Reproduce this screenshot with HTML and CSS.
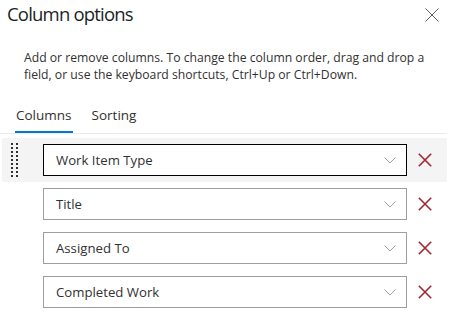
FILE: index.html
```html
<!DOCTYPE html>
<html lang="en">
<head>
<meta charset="utf-8">
<title>Column options</title>
<link rel="stylesheet" href="styles.css">
</head>
<body>
<div class="panel">
  <div class="header">
    <h1 class="title">Column options</h1>
    <button class="close" aria-label="Close">
      <svg width="14" height="14" viewBox="0 0 14 14"><path d="M0.5 0.5L13.5 13.5M13.5 0.5L0.5 13.5" stroke="#605e5c" stroke-width="1" fill="none"/></svg>
    </button>
  </div>
  <p class="desc">Add or remove columns. To change the column order, drag and drop a field, or use the keyboard shortcuts, Ctrl+Up or Ctrl+Down.</p>
  <div class="tabs">
    <div class="tab active">Columns</div>
    <div class="tab">Sorting</div>
  </div>
  <div class="rows">
    <div class="row hover">
      <div class="handle">
        <svg width="8" height="34" viewBox="0 0 8 34">
          <g fill="#323130">
            <rect x="0" y="0" width="2" height="2"/><rect x="5" y="0" width="2" height="2"/>
            <rect x="0" y="4" width="2" height="2"/><rect x="5" y="4" width="2" height="2"/>
            <rect x="0" y="8" width="2" height="2"/><rect x="5" y="8" width="2" height="2"/>
            <rect x="0" y="12" width="2" height="2"/><rect x="5" y="12" width="2" height="2"/>
            <rect x="0" y="16" width="2" height="2"/><rect x="5" y="16" width="2" height="2"/>
            <rect x="0" y="20" width="2" height="2"/><rect x="5" y="20" width="2" height="2"/>
            <rect x="0" y="24" width="2" height="2"/><rect x="5" y="24" width="2" height="2"/>
            <rect x="0" y="28" width="2" height="2"/><rect x="5" y="28" width="2" height="2"/>
            <rect x="0" y="32" width="2" height="2"/><rect x="5" y="32" width="2" height="2"/>
          </g>
        </svg>
      </div>
      <div class="dropdown focused"><span>Work Item Type</span><svg class="chev" width="12" height="7" viewBox="0 0 12 7"><path d="M0.5 0.5L6 6L11.5 0.5" stroke="#a19f9d" stroke-width="1" fill="none"/></svg></div>
      <button class="remove" aria-label="Remove"><svg width="14" height="14" viewBox="0 0 14 14"><path d="M0.8 0.8L13.2 13.2M13.2 0.8L0.8 13.2" stroke="#a4262c" stroke-width="1.6" fill="none"/></svg></button>
    </div>
    <div class="row">
      <div class="handle"></div>
      <div class="dropdown"><span>Title</span><svg class="chev" width="12" height="7" viewBox="0 0 12 7"><path d="M0.5 0.5L6 6L11.5 0.5" stroke="#a19f9d" stroke-width="1" fill="none"/></svg></div>
      <button class="remove" aria-label="Remove"><svg width="14" height="14" viewBox="0 0 14 14"><path d="M0.8 0.8L13.2 13.2M13.2 0.8L0.8 13.2" stroke="#a4262c" stroke-width="1.6" fill="none"/></svg></button>
    </div>
    <div class="row">
      <div class="handle"></div>
      <div class="dropdown"><span>Assigned To</span><svg class="chev" width="12" height="7" viewBox="0 0 12 7"><path d="M0.5 0.5L6 6L11.5 0.5" stroke="#a19f9d" stroke-width="1" fill="none"/></svg></div>
      <button class="remove" aria-label="Remove"><svg width="14" height="14" viewBox="0 0 14 14"><path d="M0.8 0.8L13.2 13.2M13.2 0.8L0.8 13.2" stroke="#a4262c" stroke-width="1.6" fill="none"/></svg></button>
    </div>
    <div class="row">
      <div class="handle"></div>
      <div class="dropdown"><span>Completed Work</span><svg class="chev" width="12" height="7" viewBox="0 0 12 7"><path d="M0.5 0.5L6 6L11.5 0.5" stroke="#a19f9d" stroke-width="1" fill="none"/></svg></div>
      <button class="remove" aria-label="Remove"><svg width="14" height="14" viewBox="0 0 14 14"><path d="M0.8 0.8L13.2 13.2M13.2 0.8L0.8 13.2" stroke="#a4262c" stroke-width="1.6" fill="none"/></svg></button>
    </div>
  </div>
</div>
</body>
</html>
```

FILE: styles.css
```css
* { box-sizing: border-box; }
html, body { margin: 0; padding: 0; background: #ffffff; }
body {
  font-family: "Segoe UI", "Open Sans", "Noto Sans", sans-serif;
  color: #323130;
  width: 456px;
  height: 317px;
  overflow: hidden;
}
.panel { padding: 0; }
.header {
  display: flex;
  justify-content: space-between;
  align-items: flex-start;
  height: 40px;
}
.title {
  margin: 0;
  padding: 0 0 0 7px;
  font-family: "Segoe UI", "Open Sans", sans-serif;
  font-size: 18.5px;
  letter-spacing: -0.8px;
  font-weight: 400;
  line-height: 27px;
  color: #201f1e;
}
.close {
  border: 0;
  background: transparent;
  padding: 0;
  margin: 8px 17px 0 0;
  width: 14px;
  height: 14px;
  display: flex;
}
.desc {
  margin: 9px 0 0 24px;
  font-size: 12.2px;
  line-height: 17px;
  color: #323130;
  width: 420px;
}
.tabs {
  display: flex;
  gap: 18px;
  margin: 20px 9px 0 0;
  padding-left: 15px;
  border-bottom: 1px solid #edebe9;
}
.tab {
  font-size: 13.5px;
  line-height: 19px;
  padding: 3px 1px 8px;
  color: #323130;
}
.tab.active {
  border-bottom: 2px solid #0078d4;
  padding-bottom: 6px;
}
.rows {
  margin-top: 4px;
  display: flex;
  flex-direction: column;
}
.row {
  display: flex;
  align-items: center;
  height: 44px;
  margin-right: 9px;
  margin-left: 2px;
}
.row.hover { background: #f4f4f4; }
.handle {
  width: 41px;
  height: 34px;
  padding: 0 0 0 9px;
  display: flex;
  align-items: center;
}
.dropdown {
  width: 364px;
  height: 32px;
  border: 1px solid #a19f9d;
  background: #ffffff;
  display: flex;
  align-items: center;
  justify-content: space-between;
  padding: 0 10px 0 12px;
  font-size: 13.2px;
  color: #323130;
}
.dropdown.focused { border: 1px solid #000000; }
.dropdown span { line-height: 20px; }
.remove {
  border: 0;
  background: transparent;
  padding: 0;
  margin-left: 11px;
  width: 14px;
  height: 14px;
  display: flex;
}
```
